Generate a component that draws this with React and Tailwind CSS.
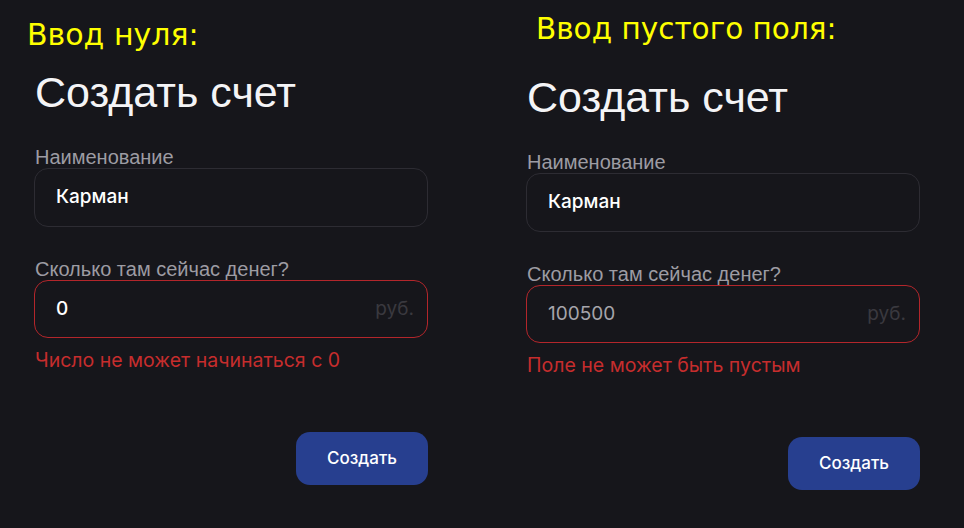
import React from 'react';

function AccountForm({ amount, placeholder, error }) {
  return (
    <div className="w-[394px] flex flex-col">
      <h1 className="font-['Liberation_Sans',Arial,sans-serif] text-[43px] leading-[48px] text-[#f4f4f6] ml-px">
        Создать счет
      </h1>

      <label className="mt-[30px] font-['Liberation_Sans',Arial,sans-serif] text-[20px] leading-[22px] text-[#9d9ca3] ml-px">
        Наименование
      </label>
      <div className="h-[59px] rounded-[14px] border border-[#2d2c33] flex items-center pl-[21px]">
        <span className="font-[Inter,sans-serif] text-[19px] font-medium text-white">Карман</span>
      </div>

      <label className="mt-[31px] font-['Liberation_Sans',Arial,sans-serif] text-[20px] leading-[22px] text-[#9d9ca3] ml-px">
        Сколько там сейчас денег?
      </label>
      <div className="h-[58px] rounded-[14px] border border-[#b3262b] flex items-center justify-between pl-[21px] pr-[13px]">
        {amount ? (
          <span className="font-[Inter,sans-serif] text-[19px] font-medium text-white">{amount}</span>
        ) : (
          <span className="font-[Inter,sans-serif] text-[19px] text-[#a6a5ab]">{placeholder}</span>
        )}
        <span className="font-[Inter,sans-serif] text-[19px] text-[#3a393f]">руб.</span>
      </div>

      <p className="mt-[10px] font-[Inter,sans-serif] text-[19.5px] leading-[24px] text-[#c62d2d] ml-px">
        {error}
      </p>

      <div className="mt-[60px] flex justify-end">
        <button className="w-[132px] h-[53px] rounded-[14px] bg-[#273f8f] text-white font-[Inter,sans-serif] text-[17px] font-medium">
          Создать
        </button>
      </div>
    </div>
  );
}

export default function App() {
  return (
    <div className="w-[964px] h-[528px] bg-[#16161b] flex overflow-hidden">
      <div className="pl-[27px] pt-[19px] flex flex-col">
        <div className="font-['DejaVu_Sans',sans-serif] text-[30px] leading-[32px] text-[#ffff00]">
          Ввод нуля:
        </div>
        <div className="ml-[7px] mt-[17px]">
          <AccountForm amount="0" error="Число не может начинаться с 0" />
        </div>
      </div>

      <div className="ml-[98px] pt-[13px] flex flex-col">
        <div className="ml-[10px] font-['DejaVu_Sans',sans-serif] text-[29.5px] leading-[32px] text-[#ffff00]">
          Ввод пустого поля:
        </div>
        <div className="mt-[28px]">
          <AccountForm placeholder="100500" error="Поле не может быть пустым" />
        </div>
      </div>
    </div>
  );
}
